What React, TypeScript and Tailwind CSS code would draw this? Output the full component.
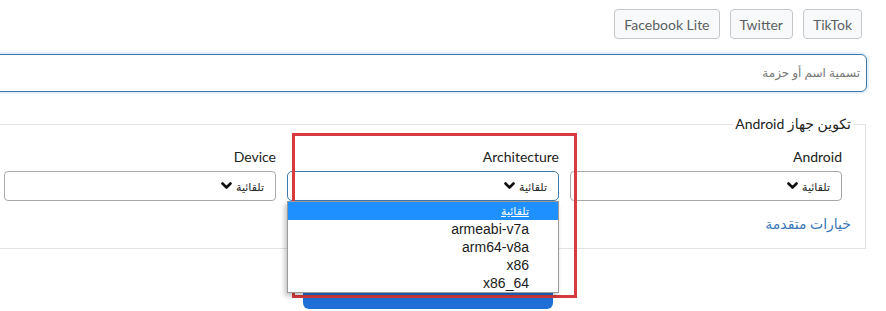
import { ReactNode } from "react";

const apps = ["TikTok", "Twitter", "Facebook Lite"];
const archOptions = ["armeabi-v7a", "arm64-v8a", "x86", "x86_64"];

function Chevron() {
  return (
    <svg width="11" height="8" viewBox="0 0 11 8" className="shrink-0">
      <path d="M1.5 1.5 L5.5 5.5 L9.5 1.5" fill="none" stroke="#111" strokeWidth="2.6" strokeLinecap="round" strokeLinejoin="round" />
    </svg>
  );
}

function Select({ focused = false }: { focused?: boolean }) {
  return (
    <div
      className={`h-[30px] bg-white flex items-center gap-[4px] pr-[11px] ${
        focused ? "border border-[#3f78ad] rounded-[5px]" : "border border-[#a8a8a8] rounded-[4px]"
      }`}
    >
      <span className="text-[11px] text-[#222] leading-none">تلقائية</span>
      <Chevron />
    </div>
  );
}

function Field({ label, children }: { label: string; children: ReactNode }) {
  return (
    <div className="relative">
      <div className="text-[14px] leading-[20px] text-[#222] mb-[4px]">{label}</div>
      {children}
    </div>
  );
}

export default function App() {
  return (
    <div
      className="relative w-[886px] h-[311px] overflow-hidden bg-white flex justify-end"
      style={{ fontFamily: "Lato, 'DejaVu Sans', sans-serif" }}
    >
      <div dir="rtl" className="w-[900px] shrink-0 mr-[19px]">
        {/* App shortcuts */}
        <div className="flex gap-[10px] pt-[9px] pr-[5px]">
          {apps.map((app) => (
            <button
              key={app}
              className="h-[30px] px-[9px] rounded-[4px] border border-[#c4c7ca] bg-[#f8f9fa] text-[14px] text-[#5a5f64]"
            >
              {app}
            </button>
          ))}
        </div>

        {/* Search */}
        <div className="mt-[15px] h-[38px] rounded-[6px] border border-[#3d77a6] shadow-[0_0_0_2px_#e6f1fb] flex items-center pr-[6px]">
          <span className="text-[12px] text-[#777]">تسمية اسم أو حزمة</span>
        </div>

        {/* Device config */}
        <fieldset className="mt-[22px] mr-[1px] border border-[#e2e2e2] pr-[23px] pl-[36px] pt-[13px] pb-[14px]">
          <legend className="-mr-[11px] px-[2px] text-[14px] leading-[20px] text-[#222]">تكوين جهاز Android</legend>
          <div className="grid grid-cols-3 gap-[11px]">
            <Field label="Android">
              <Select />
            </Field>
            <Field label="Architecture">
              <Select focused />
              <div className="absolute top-full left-0 right-0 z-10 border border-[#9a9a9a] bg-white shadow-[-2px_3px_5px_rgba(0,0,0,0.25)]">
                <div className="h-[18px] bg-[#1e90ff] text-white text-[11px] flex items-center pr-[29px] underline">
                  تلقائية
                </div>
                {archOptions.map((opt) => (
                  <div
                    key={opt}
                    className="h-[18px] leading-[18px] pr-[29px] text-[14px] text-[#1a1a1a]"
                    style={{ fontFamily: "'Liberation Sans', Arial, sans-serif" }}
                  >
                    {opt}
                  </div>
                ))}
              </div>
            </Field>
            <Field label="Device">
              <Select />
            </Field>
          </div>
          <div className="mt-[13px] -mr-[9px] text-[14px] leading-[20px] text-[#3a77b8]">خيارات متقدمة</div>
        </fieldset>

        {/* Submit */}
        <div className="mt-[28px] mr-[314px] w-[250px] h-[32px] rounded-[6px] bg-[#1f6fd6]" />
      </div>

      {/* Annotation frame */}
      <div className="absolute left-[292px] top-[133px] w-[285px] h-[165px] border-[3px] border-[#d93a40] pointer-events-none" />
    </div>
  );
}
